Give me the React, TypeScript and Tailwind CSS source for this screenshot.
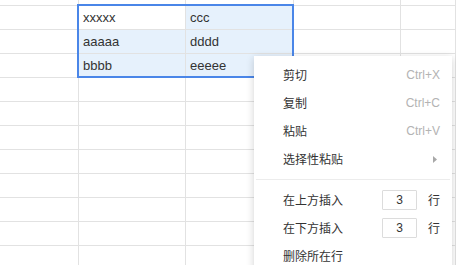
import React from "react";

const colW = ["w-[79px]", "w-[107px]", "w-[108px]", "w-[107px]", "flex-1"];

const data: Record<string, string> = {
  "1-1": "xxxxx",
  "1-2": "ccc",
  "2-1": "aaaaa",
  "2-2": "dddd",
  "3-1": "bbbb",
  "3-2": "eeeee",
};

function Row({ r }: { r: number }) {
  const h = r === 0 ? "h-[6px]" : "h-[24px]";
  return (
    <div className={`flex ${h}`}>
      {colW.map((w, c) => {
        const sel = r >= 1 && r <= 3 && (c === 1 || c === 2);
        const active = r === 1 && c === 1;
        const bg = sel && !active ? "bg-[#e6f1fc]" : "bg-white";
        return (
          <div
            key={c}
            className={`${w} ${bg} shrink-0 border-r border-b border-[#e2e2e2] flex items-center pl-[4px] text-[13px] text-[#333] overflow-hidden`}
          >
            {data[`${r}-${c}`] ?? ""}
          </div>
        );
      })}
    </div>
  );
}

function Item({
  label,
  right,
}: {
  label: string;
  right?: React.ReactNode;
}) {
  return (
    <div className="h-[28px] flex items-center pl-[29px] pr-[12px] text-[12px] text-[#333]">
      <span className="flex-1">{label}</span>
      {right}
    </div>
  );
}

function Shortcut({ t }: { t: string }) {
  return <span className="text-[#b3b3b3] text-[12px]" style={{ fontFamily: '"Liberation Sans", Arial, sans-serif' }}>{t}</span>;
}

function InsertRight() {
  return (
    <div className="flex items-center">
      <div className="w-[35px] h-[20px] border border-[#dcdcdc] flex items-center justify-center text-[12px] text-[#333] rounded-[1px]" style={{ fontFamily: '"Liberation Sans", Arial, sans-serif' }}>
        3
      </div>
      <span className="ml-[11px]">行</span>
    </div>
  );
}

export default function App() {
  const rows = Array.from({ length: 12 }, (_, i) => i);
  return (
    <div
      className="relative w-[456px] h-[265px] overflow-hidden bg-white"
      style={{ fontFamily: '"Liberation Sans", "Noto Sans CJK SC", sans-serif' }}
    >
      <div className="flex flex-col">
        {rows.map((r) => (
          <Row key={r} r={r} />
        ))}
      </div>

      <div className="absolute left-[77px] top-[4px] w-[217px] h-[74px] border-2 border-[#4a86e8] pointer-events-none" />

      <div
        className="absolute left-[254px] top-[56px] w-[198px] h-[230px] bg-white pt-[5px] shadow-[0_2px_8px_rgba(0,0,0,0.18)]"
        style={{ fontFamily: '"Noto Sans CJK SC", "Liberation Sans", sans-serif' }}
      >
        <Item label="剪切" right={<Shortcut t="Ctrl+X" />} />
        <Item label="复制" right={<Shortcut t="Ctrl+C" />} />
        <Item label="粘贴" right={<Shortcut t="Ctrl+V" />} />
        <Item
          label="选择性粘贴"
          right={
            <svg width="4" height="7" viewBox="0 0 4 7" className="mr-[3px]">
              <path d="M0 0 L4 3.5 L0 7 Z" fill="#a8a8a8" />
            </svg>
          }
        />
        <div className="my-[6px] mx-[2px] h-px bg-[#ececec]" />
        <Item label="在上方插入" right={<InsertRight />} />
        <Item label="在下方插入" right={<InsertRight />} />
        <Item label="删除所在行" />
      </div>
    </div>
  );
}
